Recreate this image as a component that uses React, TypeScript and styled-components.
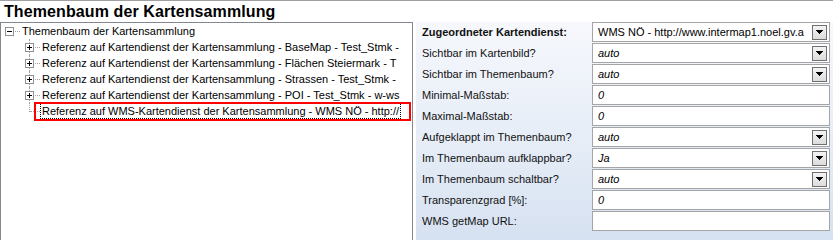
import React from "react";
import styled, { createGlobalStyle } from "styled-components";

const Global = createGlobalStyle`
  * { box-sizing: border-box; }
  html, body { margin: 0; padding: 0; background: #fff; }
  body {
    width: 833px;
    height: 240px;
    overflow: hidden;
    font-family: "Liberation Sans", Arial, sans-serif;
    font-size: 11px;
    color: #000;
  }
`;

const Page = styled.div`
  width: 833px;
  height: 240px;
  display: flex;
  flex-direction: column;
  overflow: hidden;
`;

const TitleBar = styled.h1`
  margin: 0;
  height: 22px;
  flex: none;
  border-top: 1px solid #a0a0a0;
  padding-left: 4px;
  font: bold 16px "Liberation Sans", Arial, sans-serif;
  letter-spacing: 0.1px;
  line-height: 21px;
  color: #000;
`;

const Body = styled.div`
  flex: 1;
  display: flex;
  gap: 3px;
  min-height: 0;
`;

const TreePanel = styled.div`
  width: 413px;
  flex: none;
  border: 1px solid #828790;
  border-bottom: none;
  background: #fff;
  overflow: hidden;
`;

const TreeList = styled.ul`
  list-style: none;
  margin: 0;
  padding: 0;
`;

const Row = styled.li<{ $level: number; $marked?: boolean }>`
  position: relative;
  display: flex;
  align-items: center;
  height: 16px;
  padding-left: ${(p) => p.$level * 20}px;
  white-space: nowrap;

  &::after {
    content: ${(p) => (p.$marked ? '""' : "none")};
    position: absolute;
    left: 33px;
    right: 1px;
    top: -1px;
    bottom: -2px;
    border: 2px solid #f00;
    pointer-events: none;
  }
`;

const Expander = styled.span<{ $vline: "none" | "full" | "half" }>`
  position: relative;
  flex: none;
  width: 18px;
  height: 16px;

  &::before {
    content: ${(p) => (p.$vline === "none" ? "none" : '""')};
    position: absolute;
    left: 8px;
    top: 0;
    height: ${(p) => (p.$vline === "half" ? "9px" : "16px")};
    border-left: 1px dotted #a0a0a0;
  }

  &::after {
    content: "";
    position: absolute;
    left: 9px;
    right: -1px;
    top: 8px;
    border-top: 1px dotted #a0a0a0;
  }
`;

const BoxIcon = styled.svg`
  position: absolute;
  left: 4px;
  top: 4px;
  z-index: 1;
  display: block;
`;

const NodeLabel = styled.span<{ $focused?: boolean }>`
  margin-left: 1px;
  padding: 0 1px;
  border: 1px dotted ${(p) => (p.$focused ? "#000" : "transparent")};
  line-height: 14px;
  font-size: 11px;
  color: #000;
  white-space: nowrap;
`;

const FormPanel = styled.div`
  flex: 1;
  background: linear-gradient(to bottom, #f6f8fc 0%, #e6edf7 55%, #d6e1f1 100%);
  padding: 0 3px 0 6px;
  display: grid;
  grid-template-columns: 170px 1fr;
  grid-auto-rows: 20px;
  row-gap: 1px;
  align-content: start;
`;

const Label = styled.div<{ $bold?: boolean }>`
  display: flex;
  align-items: center;
  font-size: 11px;
  font-weight: ${(p) => (p.$bold ? "bold" : "normal")};
  color: #111;
  white-space: nowrap;
`;

const Field = styled.div`
  display: flex;
  align-items: center;
  border: 1px solid #a5a5a5;
  background: #fff;
  padding: 0 2px 0 5px;
  min-width: 0;
  overflow: hidden;
`;

const Value = styled.span<{ $italic?: boolean }>`
  flex: 1;
  min-width: 0;
  overflow: hidden;
  white-space: nowrap;
  font-size: 11px;
  font-style: ${(p) => (p.$italic ? "italic" : "normal")};
  color: #000;
`;

const DropButton = styled.span`
  flex: none;
  width: 15px;
  height: 15px;
  margin-left: 4px;
  border: 1px solid #707070;
  background: linear-gradient(to bottom, #f4f4f4, #dcdcdc);
  display: flex;
  align-items: center;
  justify-content: center;
`;

type Node = {
  text: string;
  level: number;
  box?: "plus" | "minus";
  vline: "none" | "full" | "half";
  selected?: boolean;
};

const nodes: Node[] = [
  { text: "Themenbaum der Kartensammlung", level: 0, box: "minus", vline: "none" },
  {
    text: "Referenz auf Kartendienst der Kartensammlung - BaseMap - Test_Stmk -",
    level: 1,
    box: "plus",
    vline: "full",
  },
  {
    text: "Referenz auf Kartendienst der Kartensammlung - Flächen Steiermark - T",
    level: 1,
    box: "plus",
    vline: "full",
  },
  {
    text: "Referenz auf Kartendienst der Kartensammlung - Strassen - Test_Stmk -",
    level: 1,
    box: "plus",
    vline: "full",
  },
  {
    text: "Referenz auf Kartendienst der Kartensammlung - POI - Test_Stmk - w-ws",
    level: 1,
    box: "plus",
    vline: "full",
  },
  {
    text: "Referenz auf WMS-Kartendienst der Kartensammlung - WMS NÖ - http://",
    level: 1,
    vline: "half",
    selected: true,
  },
];

type FormRow = {
  label: string;
  bold?: boolean;
  value: string;
  italic?: boolean;
  combo?: boolean;
};

const rows: FormRow[] = [
  {
    label: "Zugeordneter Kartendienst:",
    bold: true,
    value: "WMS NÖ - http://www.intermap1.noel.gv.a",
    combo: true,
  },
  { label: "Sichtbar im Kartenbild?", value: "auto", italic: true, combo: true },
  { label: "Sichtbar im Themenbaum?", value: "auto", italic: true, combo: true },
  { label: "Minimal-Maßstab:", value: "0", italic: true },
  { label: "Maximal-Maßstab:", value: "0", italic: true },
  { label: "Aufgeklappt im Themenbaum?", value: "auto", italic: true, combo: true },
  { label: "Im Themenbaum aufklappbar?", value: "Ja", italic: true, combo: true },
  { label: "Im Themenbaum schaltbar?", value: "auto", italic: true, combo: true },
  { label: "Transparenzgrad [%]:", value: "0", italic: true },
  { label: "WMS getMap URL:", value: "" },
];

function ExpandBox({ kind }: { kind: "plus" | "minus" }) {
  return (
    <BoxIcon width="9" height="9" viewBox="0 0 9 9" shapeRendering="crispEdges">
      <rect x="0.5" y="0.5" width="8" height="8" fill="#fff" stroke="#919191" />
      <path d="M2 4.5h5" stroke="#000" />
      {kind === "plus" && <path d="M4.5 2v5" stroke="#000" />}
    </BoxIcon>
  );
}

function Arrow() {
  return (
    <svg width="7" height="4" viewBox="0 0 7 4" shapeRendering="crispEdges">
      <path d="M0 0h7v1h-1v1h-1v1h-1v1h-1v-1h-1v-1h-1v-1h-1z" fill="#000" />
    </svg>
  );
}

export default function App() {
  return (
    <Page>
      <Global />
      <TitleBar>Themenbaum der Kartensammlung</TitleBar>
      <Body>
        <TreePanel>
          <TreeList>
            {nodes.map((n, i) => (
              <Row key={i} $level={n.level} $marked={n.selected}>
                <Expander $vline={n.vline}>{n.box && <ExpandBox kind={n.box} />}</Expander>
                <NodeLabel $focused={n.selected}>{n.text}</NodeLabel>
              </Row>
            ))}
          </TreeList>
        </TreePanel>
        <FormPanel>
          {rows.map((r, i) => (
            <React.Fragment key={i}>
              <Label $bold={r.bold}>{r.label}</Label>
              <Field>
                <Value $italic={r.italic}>{r.value}</Value>
                {r.combo && (
                  <DropButton>
                    <Arrow />
                  </DropButton>
                )}
              </Field>
            </React.Fragment>
          ))}
        </FormPanel>
      </Body>
    </Page>
  );
}
